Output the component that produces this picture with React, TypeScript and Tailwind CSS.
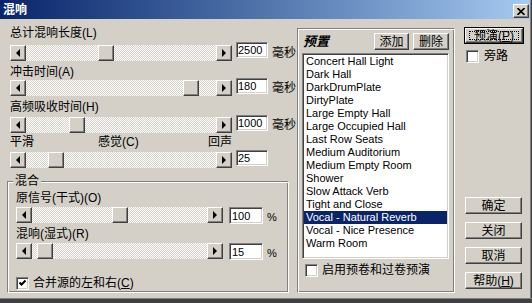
import React from 'react';

const raised =
  'border border-t-white border-l-white border-r-[#404040] border-b-[#404040] shadow-[inset_-1px_-1px_#808080]';
const sunken =
  'border border-t-[#808080] border-l-[#808080] border-r-white border-b-white shadow-[inset_1px_1px_#404040,inset_-1px_-1px_#d4d0c8]';
const etched =
  'border border-t-[#808080] border-l-[#808080] border-r-white border-b-white shadow-[inset_1px_1px_#ffffff,inset_-1px_-1px_#808080]';

const presets = [
  'Concert Hall Light',
  'Dark Hall',
  'DarkDrumPlate',
  'DirtyPlate',
  'Large Empty Hall',
  'Large Occupied Hall',
  'Last Row Seats',
  'Medium Auditorium',
  'Medium Empty Room',
  'Shower',
  'Slow Attack Verb',
  'Tight and Close',
  'Vocal - Natural Reverb',
  'Vocal - Nice Presence',
  'Warm Room',
];

const ArrowButton: React.FC<{ dir: 'left' | 'right' }> = ({ dir }) => (
  <div className={`w-[16px] h-[16px] shrink-0 bg-[#d4d0c8] flex items-center justify-center ${raised}`}>
    {dir === 'left' ? (
      <div className="w-0 h-0 border-y-[4px] border-y-transparent border-r-[4px] border-r-black" />
    ) : (
      <div className="w-0 h-0 border-y-[4px] border-y-transparent border-l-[4px] border-l-black" />
    )}
  </div>
);

const Slider: React.FC<{ className: string; pos: number }> = ({ className, pos }) => (
  <div className={`flex h-[16px] shrink-0 ${className}`}>
    <ArrowButton dir="left" />
    <div className="flex-1 h-full bg-[image:repeating-conic-gradient(#ffffff_0_25%,#d4d0c8_0_50%)] bg-[length:2px_2px]">
      <div className={`w-[16px] h-[16px] bg-[#d4d0c8] ${raised}`} style={{ marginLeft: pos }} />
    </div>
    <ArrowButton dir="right" />
  </div>
);

const TextBox: React.FC<{ className: string; value: string }> = ({ className, value }) => (
  <div className={`shrink-0 bg-white text-[11px] leading-[12px] ${sunken} ${className}`}>{value}</div>
);

const Label: React.FC<{ className?: string; children: React.ReactNode }> = ({ className = '', children }) => (
  <div className={`h-[14px] leading-[14px] whitespace-nowrap ${className}`}>{children}</div>
);

const Checkbox: React.FC<{ checked?: boolean }> = ({ checked }) => (
  <div className={`w-[13px] h-[13px] shrink-0 bg-white flex items-center justify-center ${sunken}`}>
    {checked && (
      <svg width="7" height="7" viewBox="0 0 7 7">
        <path d="M0.5 2.5 L2.5 4.5 L6.5 0.5" stroke="black" strokeWidth="2" fill="none" />
      </svg>
    )}
  </div>
);

const Button: React.FC<{ className: string; children: React.ReactNode }> = ({ className, children }) => (
  <div className={`bg-[#d4d0c8] flex items-center justify-center leading-[14px] whitespace-nowrap ${raised} ${className}`}>
    {children}
  </div>
);

export default function App() {
  return (
    <div className="w-[532px] h-[303px] bg-[#d4d0c8] flex flex-col overflow-hidden text-[12px] text-black font-['Liberation_Sans','Noto_Sans_CJK_SC',sans-serif]">
      <div className="flex flex-1 flex-col border-r border-r-[#404040] shadow-[inset_-1px_0_#808080]">
        {/* title bar */}
        <div className="h-[19px] mb-[1px] mr-[1px] flex items-start bg-gradient-to-r from-[#0a246a] to-[#a6caf0]">
          <span className="pl-[3px] mt-[3px] leading-[14px] font-bold text-white">混响</span>
          <div className={`ml-auto mr-[1px] mt-[4px] w-[16px] h-[14px] bg-[#d4d0c8] flex items-center justify-center ${raised}`}>
            <svg width="8" height="7" viewBox="0 0 8 7">
              <path d="M0.5 0 L7.5 7 M7.5 0 L0.5 7" stroke="black" strokeWidth="1.6" />
            </svg>
          </div>
        </div>

        <div className="flex flex-1">
          {/* left controls */}
          <div className="w-[290px] shrink-0 pl-[7px] pt-[6px] flex flex-col">
            <Label className="ml-[3px]">总计混响长度(L)</Label>
            <div className="flex items-start ml-[3px] mt-[2px] h-[19px]">
              <Slider className="w-[222px] mt-[3px]" pos={72} />
              <TextBox className="w-[32px] h-[16px] ml-[4px] pl-[1px] pt-[1px]" value="2500" />
              <span className="shrink-0 whitespace-nowrap ml-[4px] mt-[3px] leading-[16px]">毫秒</span>
            </div>

            <Label className="ml-[3px] mt-[4px]">冲击时间(A)</Label>
            <div className="flex items-start ml-[3px] -mt-[1px] h-[18px]">
              <Slider className="w-[222px] mt-[2px]" pos={157} />
              <TextBox className="w-[32px] h-[16px] ml-[4px] pl-[1px] pt-[1px]" value="180" />
              <span className="shrink-0 whitespace-nowrap ml-[4px] mt-[2px] leading-[16px]">毫秒</span>
            </div>

            <Label className="ml-[3px] mt-[4px]">高频吸收时间(H)</Label>
            <div className="flex items-start ml-[3px] mt-[1px] h-[18px]">
              <Slider className="w-[222px] mt-[2px]" pos={43} />
              <TextBox className="w-[32px] h-[16px] ml-[4px] pl-[1px] pt-[1px]" value="1000" />
              <span className="shrink-0 whitespace-nowrap ml-[4px] mt-[2px] leading-[16px]">毫秒</span>
            </div>

            <div className="flex ml-[3px] mt-[2px] h-[14px] leading-[14px] whitespace-nowrap">
              <span className="w-[88px]">平滑</span>
              <span className="w-[110px]">感觉(C)</span>
              <span>回声</span>
            </div>
            <div className="flex items-start ml-[3px] mt-[1px] h-[18px]">
              <Slider className="w-[222px] mt-[2px]" pos={22} />
              <TextBox className="w-[32px] h-[16px] ml-[4px] pl-[1px] pt-[1px]" value="25" />
            </div>

            <fieldset className={`mt-[6px] w-[282px] h-[119px] ${etched}`}>
              <legend className="ml-[5px] px-[2px] leading-[14px] bg-[#d4d0c8]">混合</legend>
              <div className="pl-[8px] flex flex-col">
                <Label className="mt-[3px]">原信号(干式)(O)</Label>
                <div className="flex items-start mt-[2px] h-[17px]">
                  <Slider className="w-[207px]" pos={80} />
                  <TextBox className="w-[34px] h-[17px] ml-[6px] pl-[2px] pt-[2px]" value="100" />
                  <span className="shrink-0 ml-[4px] mt-[4px] text-[11px] leading-[12px]">%</span>
                </div>
                <Label className="mt-[3px]">混响(湿式)(R)</Label>
                <div className="flex items-start mt-[2px] h-[17px]">
                  <Slider className="w-[207px]" pos={5} />
                  <TextBox className="w-[34px] h-[17px] ml-[6px] pl-[2px] pt-[2px]" value="15" />
                  <span className="shrink-0 ml-[4px] mt-[4px] text-[11px] leading-[12px]">%</span>
                </div>
                <div className="flex items-center mt-[16px]">
                  <Checkbox checked />
                  <span className="ml-[4px] leading-[14px] whitespace-nowrap">
                    合并源的左和右(<u>C</u>)
                  </span>
                </div>
              </div>
            </fieldset>
          </div>

          {/* presets panel */}
          <div className={`ml-[7px] mt-[8px] w-[158px] h-[265px] shrink-0 flex flex-col pl-[4px] pr-[5px] pt-[4px] ${etched}`}>
            <div className="flex items-start h-[17px]">
              <span className="ml-[1px] mt-[1px] text-[13px] leading-[16px] font-bold italic">预置</span>
              <Button className="ml-auto w-[35px] h-[17px]">添加</Button>
              <Button className="ml-[4px] w-[36px] h-[17px]">删除</Button>
            </div>
            <div className={`mt-[3px] h-[206px] bg-white p-[1px] ${sunken}`}>
              <ul className="text-[11px]">
                {presets.map((name) => (
                  <li
                    key={name}
                    className={
                      name === 'Vocal - Natural Reverb'
                        ? 'h-[13px] leading-[13px] px-[2px] whitespace-nowrap bg-[#0a246a] text-white'
                        : 'h-[13px] leading-[13px] px-[2px] whitespace-nowrap'
                    }
                  >
                    {name}
                  </li>
                ))}
              </ul>
            </div>
            <div className="flex items-center mt-[4px] ml-[3px]">
              <Checkbox />
              <span className="ml-[4px] leading-[14px] whitespace-nowrap">启用预卷和过卷预演</span>
            </div>
          </div>

          {/* right buttons */}
          <div className="ml-[8px] w-[62px] shrink-0 flex flex-col pb-[9px]">
            <div className="mt-[7px] ml-[1px] w-[60px] h-[17px] border border-black">
              <div className={`h-full flex px-[3px] py-[2px] bg-[#d4d0c8] ${raised}`}>
                <div className="flex-1 flex items-center justify-center border border-dotted border-black leading-[12px] whitespace-nowrap">
                  预演(<u>P</u>)
                </div>
              </div>
            </div>
            <div className="flex items-center mt-[5px] ml-[3px]">
              <Checkbox />
              <span className="ml-[5px] leading-[14px]">旁路</span>
            </div>
            <div className="mt-auto ml-[2px] flex flex-col gap-[8px]">
              <Button className="w-[57px] h-[17px]">确定</Button>
              <Button className="w-[57px] h-[17px]">关闭</Button>
              <Button className="w-[57px] h-[17px]">取消</Button>
              <Button className="w-[57px] h-[17px]">
                帮助(<u>H</u>)
              </Button>
            </div>
          </div>
        </div>
      </div>
      <div className="h-[1px] bg-[#808080]" />
      <div className="h-[4px] bg-[#404040]" />
    </div>
  );
}
